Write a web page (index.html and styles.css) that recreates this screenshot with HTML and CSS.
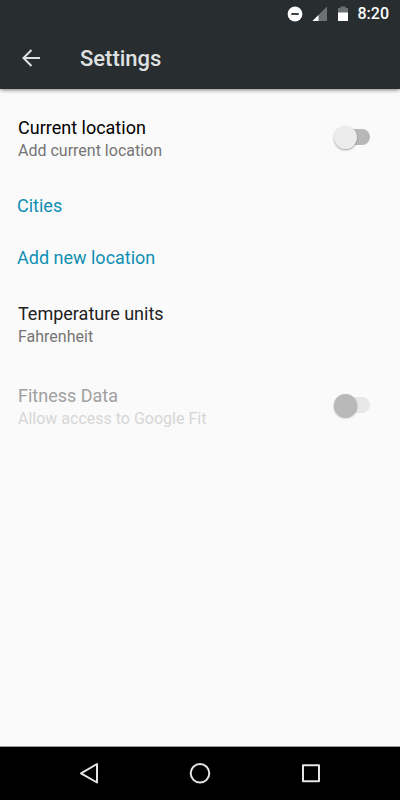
FILE: index.html
```html
<!DOCTYPE html>
<html lang="en">
<head>
<meta charset="utf-8">
<meta name="viewport" content="width=device-width, initial-scale=1">
<title>Settings</title>
<link rel="stylesheet" href="styles.css">
</head>
<body>
<header class="header">
  <div class="status">
    <svg width="16" height="16" viewBox="0 0 16 16" aria-hidden="true"><circle cx="8" cy="8" r="7.4" fill="#fff"/><path d="M4.300 8h7.400" stroke="#282d30" stroke-width="1.800"/></svg>
    <svg width="16" height="16" viewBox="0 0 16 16" aria-hidden="true"><path d="M15 .5V15H.5z" fill="#6c7173"/><path d="M6.500 9v6h-6z" fill="#fff"/></svg>
    <svg width="12" height="16" viewBox="0 0 12 16" aria-hidden="true"><path d="M3.500 .5h5V2H11v5H1V2h2.500z" fill="#6c7173"/><path d="M1 6.500h10v8q0 .5-.5.5h-9q-.5 0-.5-.5z" fill="#fff"/></svg>
    <span class="clock">8:20</span>
  </div>
  <div class="toolbar">
    <button class="icon-button" aria-label="Back">
      <svg width="20" height="20" viewBox="0 0 20 20" fill="none" stroke="#dfe0e0" stroke-width="2"><path d="M19 9H2.500M10.500 1 2.500 9l8 8"/></svg>
    </button>
    <h1 class="title">Settings</h1>
  </div>
</header>
<main class="list">
  <label class="row">
    <span class="text"><span class="name strong">Current location</span><span class="detail">Add current location</span></span>
    <input class="switch" type="checkbox" role="switch">
  </label>
  <h2 class="section">Cities</h2>
  <button class="section">Add new location</button>
  <button class="row">
    <span class="text"><span class="name">Temperature units</span><span class="detail">Fahrenheit</span></span>
  </button>
  <label class="row disabled">
    <span class="text"><span class="name">Fitness Data</span><span class="detail">Allow access to Google Fit</span></span>
    <input class="switch" type="checkbox" role="switch" disabled>
  </label>
</main>
<nav class="nav" aria-label="System">
  <button class="icon-button" aria-label="Back"><svg width="24" height="24" viewBox="0 0 24 24" fill="none" stroke="#e4e4e4" stroke-width="2" stroke-linejoin="round"><path d="M20 2v18.500L4 11.300z"/></svg></button>
  <button class="icon-button" aria-label="Home"><svg width="24" height="24" viewBox="0 0 24 24" fill="none" stroke="#e4e4e4" stroke-width="2"><circle cx="12" cy="11.300" r="9.300"/></svg></button>
  <button class="icon-button" aria-label="Recent apps"><svg width="24" height="24" viewBox="0 0 24 24" fill="none" stroke="#e4e4e4" stroke-width="2" stroke-linejoin="round"><path d="M4 3.300h16v16H4z"/></svg></button>
</nav>
</body>
</html>
```
FILE: styles.css
```css
* {
  box-sizing: border-box;
}

body {
  margin: 0;
  min-height: 100vh;
  display: flex;
  flex-direction: column;
  background: #fafafa;
  color: #212121;
  font-family: Roboto, sans-serif;
}

button {
  border: 0;
  background: none;
  font: inherit;
  color: inherit;
  text-align: left;
  cursor: pointer;
}

svg {
  display: block;
}

.header {
  background: #282d30;
  box-shadow: 0 1px 4px rgba(0, 0, 0, 0.5);
}

.status {
  height: 28px;
  padding-right: 11px;
  display: flex;
  align-items: center;
  justify-content: flex-end;
  gap: 9px;
}

.clock {
  color: #fff;
  font-size: 16px;
  font-weight: 500;
  line-height: 28px;
}

.toolbar {
  height: 61px;
  padding: 0 21px;
  display: flex;
  align-items: center;
  gap: 39px;
}

.icon-button {
  padding: 0;
}

.title {
  margin: 0;
  color: #dfe0e0;
  font-size: 22px;
  font-weight: 500;
  line-height: 28px;
}

.list {
  flex: 1;
  padding-top: 9px;
  display: flex;
  flex-direction: column;
}

.row {
  padding: 18px 30px 18px 18px;
  display: flex;
  align-items: flex-start;
  justify-content: space-between;
}

.text {
  display: flex;
  flex-direction: column;
}

.name {
  font-size: 18px;
  line-height: 24px;
}

.strong {
  color: #000;
}

.detail {
  color: #757575;
  font-size: 16px;
  line-height: 22px;
}

.disabled .name {
  color: #a0a0a0;
}

.disabled .detail {
  color: #d6d6d6;
}

.section {
  margin: 0;
  padding: 14px 17px;
  color: #0f8fb3;
  font-size: 18px;
  font-weight: 400;
  line-height: 24px;
}

.switch {
  appearance: none;
  width: 36px;
  height: 24px;
  margin: 9px 0 0;
  display: grid;
  align-items: center;
}

.switch::before,
.switch::after {
  content: "";
  grid-area: 1 / 1;
}

.switch::before {
  height: 16px;
  margin-left: 4px;
  border-radius: 8px;
  background: #b8b8b8;
}

.switch::after {
  width: 23px;
  height: 23px;
  border-radius: 50%;
  background: #ececec;
  box-shadow: 0 1px 2px rgba(0, 0, 0, 0.35);
}

.switch:checked::after {
  justify-self: end;
}

.switch:disabled::before {
  background: #e8e8e8;
}

.switch:disabled::after {
  background: #b9b9b9;
}

.nav {
  height: 54px;
  padding: 0 34px;
  border-top: 1px solid #9a9a9a;
  background: #000;
  display: flex;
  align-items: center;
}

.nav .icon-button {
  flex: 1;
  display: flex;
  justify-content: center;
}
```
